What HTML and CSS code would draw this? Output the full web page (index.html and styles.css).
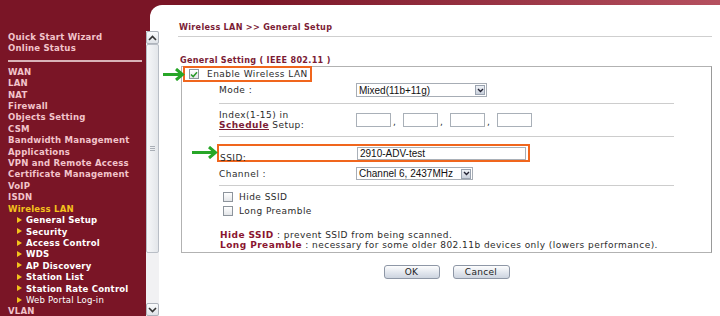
FILE: index.html
```html
<!DOCTYPE html>
<html lang="en">
<head>
    <meta charset="UTF-8">
    <title>Wireless LAN - General Setup</title>
    <link rel="stylesheet" href="styles.css">
</head>
<body>

    <!-- Left menu -->
    <div class="sidebar">
        <ul class="nav">
            <li>Quick Start Wizard</li>
            <li>Online Status</li>
        </ul>
        <div class="nav-sep"></div>
        <ul class="nav">
            <li>WAN</li>
            <li>LAN</li>
            <li>NAT</li>
            <li>Firewall</li>
            <li>Objects Setting</li>
            <li>CSM</li>
            <li>Bandwidth Management</li>
            <li>Applications</li>
            <li>VPN and Remote Access</li>
            <li>Certificate Management</li>
            <li>VoIP</li>
            <li>ISDN</li>
            <li class="open">Wireless LAN</li>
            <li class="sub active">General Setup</li>
            <li class="sub">Security</li>
            <li class="sub">Access Control</li>
            <li class="sub">WDS</li>
            <li class="sub">AP Discovery</li>
            <li class="sub">Station List</li>
            <li class="sub">Station Rate Control</li>
            <li class="sub light">Web Portal Log-in</li>
            <li>VLAN</li>
        </ul>
    </div>

    <!-- Scrollbar of the menu frame -->
    <div class="scrollbar">
        <div class="sb-btn">
            <svg width="9" height="6" viewBox="0 0 9 6"><path d="M1 5 L4.5 1.5 L8 5" fill="none" stroke="#333" stroke-width="1.6"/></svg>
        </div>
        <div class="sb-track">
            <div class="sb-thumb"><span class="grip"></span></div>
        </div>
        <div class="sb-btn">
            <svg width="9" height="6" viewBox="0 0 9 6"><path d="M1 1 L4.5 4.5 L8 1" fill="none" stroke="#333" stroke-width="1.6"/></svg>
        </div>
    </div>

    <!-- Main content -->
    <div class="main">
        <h1 class="page-title">Wireless LAN &gt;&gt; General Setup</h1>

        <h2 class="section-title">General Setting ( IEEE 802.11 )</h2>

        <div class="panel">
            <label class="enable hl">
                <span class="cb">
                    <svg width="8" height="7" viewBox="0 0 8 7"><path d="M1 3.5 L3.2 5.6 L7 1.2" fill="none" stroke="#2a9a2a" stroke-width="1.5"/></svg>
                </span>
                Enable Wireless LAN
            </label>

            <div class="fields">
                <div class="row mode-row">
                    <span class="lbl">Mode :</span>
                    <div class="select mode-select">
                        <span>Mixed(11b+11g)</span>
                        <span class="arrow"><svg width="7" height="5" viewBox="0 0 7 5"><path d="M1 1 L3.5 3.5 L6 1" fill="none" stroke="#223" stroke-width="1.4"/></svg></span>
                    </div>
                </div>

                <div class="row index-row">
                    <span class="lbl">Index(1-15) in<br><a href="#">Schedule</a> Setup:</span>
                    <div class="idx">
                        <span class="text-box"></span><span class="comma">,</span>
                        <span class="text-box"></span><span class="comma">,</span>
                        <span class="text-box"></span><span class="comma">,</span>
                        <span class="text-box"></span>
                    </div>
                </div>

                <div class="row ssid-row hl">
                    <span class="lbl">SSID:</span>
                    <span class="text-box ssid">2910-ADV-test</span>
                </div>

                <div class="row channel-row">
                    <span class="lbl">Channel :</span>
                    <div class="select channel-select">
                        <span>Channel 6, 2437MHz</span>
                        <span class="arrow"><svg width="7" height="5" viewBox="0 0 7 5"><path d="M1 1 L3.5 3.5 L6 1" fill="none" stroke="#223" stroke-width="1.4"/></svg></span>
                    </div>
                </div>

                <div class="opts">
                    <label class="opt"><span class="cb"></span>Hide SSID</label>
                    <label class="opt"><span class="cb"></span>Long Preamble</label>
                </div>

                <div class="notes">
                    <b>Hide SSID</b> : prevent SSID from being scanned.<br>
                    <b>Long Preamble</b> : necessary for some older 802.11b devices only (lowers performance).
                </div>
            </div>
        </div>

        <div class="buttons">
            <button class="btn ok">OK</button>
            <button class="btn cancel">Cancel</button>
        </div>

        <!-- green marker arrows -->
        <svg class="marker m1" width="22" height="13" viewBox="0 0 22 13"><path d="M0 6.5 H19 M13 1 L19.5 6.5 L13 12" fill="none" stroke="#27a627" stroke-width="3"/></svg>
        <svg class="marker m2" width="26" height="13" viewBox="0 0 26 13"><path d="M0 6.5 H23 M17 1 L23.5 6.5 L17 12" fill="none" stroke="#27a627" stroke-width="3"/></svg>
    </div>

</body>
</html>
```

FILE: styles.css
```css
body {
    margin: 0;
    padding: 0;
    height: 316px;
    overflow: hidden;
    display: flex;
    background: linear-gradient(to right, #7a1526 35%, #b5505f) top / 100% 5px no-repeat, #7a1526;
    font-family: "DejaVu Sans", Verdana, sans-serif;
}

/* Menu lateral */
.sidebar {
    width: 146px;
    flex: none;
    padding-top: 31px;
    box-sizing: border-box;
}

.nav {
    list-style: none;
    margin: 0;
    padding: 0;
}

.nav li {
    padding-left: 8px;
    font-family: "DejaVu Sans Condensed", "DejaVu Sans", sans-serif;
    font-stretch: condensed;
    font-size: 9.5px;
    font-weight: bold;
    line-height: 11.4px;
    letter-spacing: 0.2px;
    color: #f2c4cb;
    white-space: nowrap;
}

.nav li.open {
    color: #f4c21c;
}

.nav li.sub {
    display: flex;
    align-items: center;
    padding-left: 17px;
    color: #fff;
}

.nav li.sub::before {
    content: "";
    border-left: 5px solid #f4c21c;
    border-top: 3.5px solid transparent;
    border-bottom: 3.5px solid transparent;
    margin-right: 4px;
}

.nav li.light {
    font-weight: normal;
}

.nav-sep {
    height: 2px;
    margin: 6px 4px 4px 8px;
    background: #d9b3b8;
}

/* Barra de scroll */
.scrollbar {
    width: 13px;
    flex: none;
    margin-top: 31px;
    display: flex;
    flex-direction: column;
    position: relative;
    z-index: 1;
    background: #eceef1;
}

.sb-btn {
    height: 13px;
    box-sizing: border-box;
    border: 1px solid #aeb3bb;
    border-radius: 2px;
    background: linear-gradient(#fafbfc, #dfe3e8);
    display: flex;
    align-items: center;
    justify-content: center;
}

.sb-track {
    flex: 1;
    background: #f1f1f3;
}

.sb-thumb {
    height: 209px;
    box-sizing: border-box;
    border: 1px solid #b9bec6;
    border-radius: 2px;
    background: linear-gradient(to right, #f6f7f9, #e3e6ea);
    display: flex;
    align-items: center;
    justify-content: center;
}

.grip {
    width: 5px;
    height: 5px;
    background: repeating-linear-gradient(#a9aeb6 0 1px, transparent 1px 2px);
}

/* Contenido principal */
.main {
    flex: 1;
    margin: 5px 0 0 -9px;
    background: #fff;
    border-top-left-radius: 12px;
    position: relative;
    font-size: 9px;
    letter-spacing: 0.45px;
    color: #2b2b2b;
}

.page-title,
.section-title {
    font-family: "DejaVu Sans Condensed", "DejaVu Sans", sans-serif;
    font-stretch: condensed;
    font-size: 9px;
    line-height: 12px;
    letter-spacing: 0.3px;
    color: #7b1c35;
}

.page-title {
    margin: 0 8px 0 28px;
    padding: 16px 0 3px 1px;
    border-bottom: 1px solid #cfcfcf;
}

.section-title {
    margin: 17px 0 0 30px;
}

.panel {
    margin: 0 8px 0 31px;
    border: 1px solid #b2b2b2;
    border-right-color: #999;
}

.hl {
    border: 2px solid #f0661d;
}

.enable {
    display: inline-flex;
    align-items: center;
    height: 12px;
    margin: -1px 0 0 1px;
    padding: 0 2px 0 4px;
    line-height: 12px;
}

.cb {
    width: 10px;
    height: 10px;
    box-sizing: border-box;
    border: 1px solid #8d949c;
    background: linear-gradient(#fff, #e4e6e9);
    display: inline-flex;
    align-items: center;
    justify-content: center;
    margin-right: 8px;
}

.fields {
    padding: 0 37px;
}

.row {
    display: flex;
    align-items: center;
}

.lbl {
    width: 137px;
    flex: none;
    line-height: 10px;
}

.lbl a {
    color: #7b1c35;
    font-weight: bold;
}

.mode-row {
    padding: 1px 0 6px;
    border-bottom: 1px solid #cdcdcd;
}

.index-row {
    padding: 6px 0;
    border-bottom: 1px solid #cdcdcd;
}

.select {
    display: flex;
    align-items: center;
    justify-content: space-between;
    height: 14px;
    box-sizing: border-box;
    border: 1px solid #a7adb5;
    padding: 0 1px 0 2px;
    font-family: "Liberation Sans", Arial, sans-serif;
    font-size: 10px;
    letter-spacing: 0;
    color: #111;
}

.mode-select {
    width: 131px;
}

.channel-select {
    width: 117px;
    height: 13px;
}

.arrow {
    width: 10px;
    height: 10px;
    box-sizing: border-box;
    border: 1px solid #9aa3b0;
    background: linear-gradient(#eef1f6, #c9d0db);
    display: flex;
    align-items: center;
    justify-content: center;
}

.idx {
    display: flex;
    align-items: flex-end;
}

.text-box {
    display: block;
    width: 35px;
    height: 14px;
    box-sizing: border-box;
    border: 1px solid #a9b0b8;
    background: #fff;
}

.comma {
    width: 12px;
    padding-left: 2px;
    box-sizing: border-box;
    line-height: 10px;
}

.ssid-row {
    display: inline-flex;
    align-items: flex-start;
    height: 14px;
    margin: 7px 0 0 -2px;
    padding-right: 2px;
}

.ssid-row .lbl {
    align-self: flex-end;
    margin-bottom: -3px;
    padding-left: 1px;
}

.text-box.ssid {
    width: 169px;
    height: 13px;
    margin-top: 1px;
    padding-left: 2px;
    font-family: "Liberation Sans", Arial, sans-serif;
    font-size: 10px;
    line-height: 11px;
    letter-spacing: 0;
    color: #111;
}

.channel-row {
    padding: 4px 0 5px;
    border-bottom: 1px solid #cdcdcd;
}

.opts {
    margin-top: 4px;
    padding-left: 4px;
}

.opt {
    display: flex;
    align-items: center;
    height: 14px;
}

.opt .cb {
    margin-right: 6px;
}

.notes {
    margin-top: 12px;
    padding: 0 0 2px 1px;
    line-height: 10px;
    white-space: nowrap;
}

.notes b {
    color: #8a1530;
}

.buttons {
    display: flex;
    justify-content: center;
    gap: 13px;
    margin: 12px 8px 0 31px;
}

.btn {
    height: 14px;
    padding: 0;
    border: 1px solid #8e97a6;
    border-radius: 3px;
    background: linear-gradient(#fdfdfe, #dfe4ec 60%, #cdd4df);
    font-family: "DejaVu Sans", Verdana, sans-serif;
    font-size: 9px;
    letter-spacing: 0.3px;
    line-height: 12px;
    color: #1d1d1d;
}

.btn.ok {
    width: 56px;
}

.btn.cancel {
    width: 57px;
}

/* Flechas verdes */
.marker {
    position: absolute;
}

.m1 {
    left: 13px;
    top: 63px;
}

.m2 {
    left: 42px;
    top: 141px;
}
```
